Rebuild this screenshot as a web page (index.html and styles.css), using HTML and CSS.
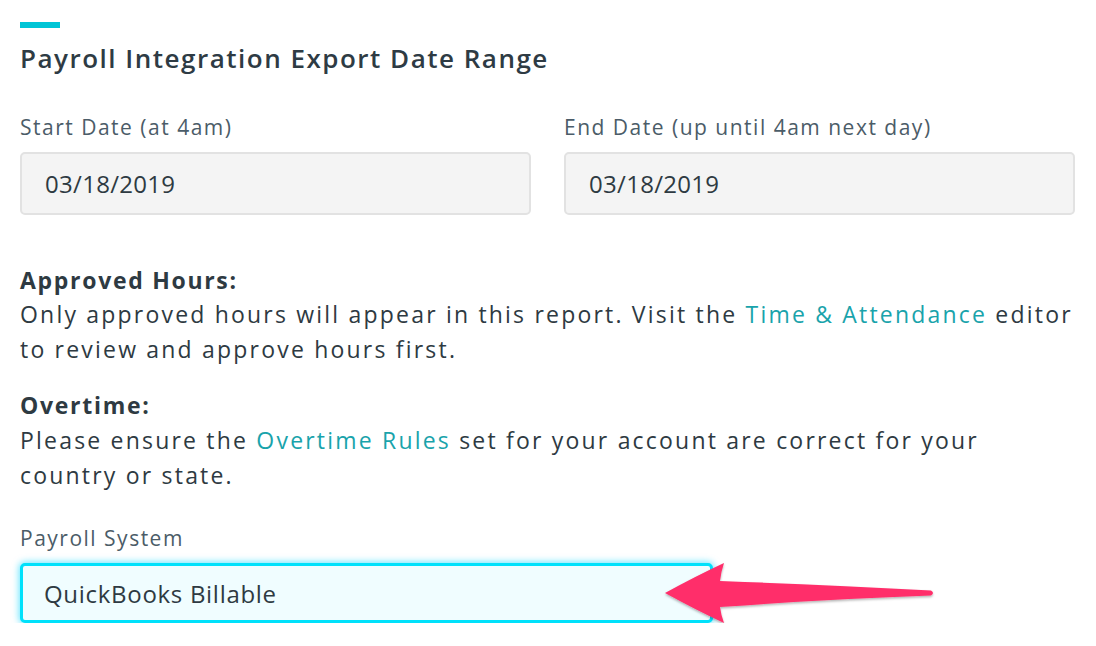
FILE: index.html
```html
<!DOCTYPE html>
<html>
<head>
<meta charset="utf-8">
<link rel="stylesheet" href="styles.css">
</head>
<body>
<div class="page">
  <div class="accent"></div>
  <h1 class="title">Payroll Integration Export Date Range</h1>
  <div class="dates">
    <div class="field">
      <div class="label">Start Date (at 4am)</div>
      <div class="input">03/18/2019</div>
    </div>
    <div class="field">
      <div class="label">End Date (up until 4am next day)</div>
      <div class="input">03/18/2019</div>
    </div>
  </div>
  <div class="note note-first">
    <div class="note-head">Approved Hours:</div>
    <p class="note-text">Only approved hours will appear in this report. Visit the <a class="link">Time &amp; Attendance</a> editor<br>to review and approve hours first.</p>
  </div>
  <div class="note note-second">
    <div class="note-head">Overtime:</div>
    <p class="note-text">Please ensure the <a class="link">Overtime Rules</a> set for your account are correct for your<br>country or state.</p>
  </div>
  <div class="system">
    <div class="label">Payroll System</div>
    <div class="select-wrap">
      <div class="select">QuickBooks Billable</div>
      <svg class="arrow" width="290" height="80" viewBox="0 0 290 80">
        <defs>
          <filter id="sh" x="-10%" y="-20%" width="120%" height="150%">
            <feDropShadow dx="0" dy="1.5" stdDeviation="1.2" flood-color="#000" flood-opacity="0.3"/>
          </filter>
        </defs>
        <path filter="url(#sh)" fill="#ff2f6b" d="M5 35 Q36 18 64 5 Q61 14 60 23 Q170 27 271 32.5 Q275 35 271 37.5 Q170 41 60 49 Q61 57 64 65 Q36 52 5 35 Z"/>
      </svg>
    </div>
  </div>
</div>
</body>
</html>
```
FILE: styles.css
```css
html, body {
  margin: 0;
  padding: 0;
  background: #ffffff;
}
.page {
  padding: 22px 21px 0 20px;
  font-family: "Open Sans", "Liberation Sans", sans-serif;
  color: #2e3a42;
}
.accent {
  width: 40px;
  height: 6px;
  background: #00c5d6;
}
.title {
  margin: 12px 0 0 0;
  font-size: 26px;
  font-weight: 600;
  line-height: 36px;
  letter-spacing: 1.5px;
  color: #2e3b44;
}
.dates {
  display: flex;
  gap: 33px;
  margin-top: 38px;
}
.field {
  flex: 1;
}
.label {
  font-size: 21px;
  line-height: 26px;
  letter-spacing: 1.5px;
  color: #4b5c68;
}
.input {
  margin-top: 12px;
  height: 59px;
  border: 2px solid #e2e2e2;
  border-radius: 5px;
  background: #f4f4f4;
  padding: 0 0 0 23px;
  display: flex;
  align-items: center;
  font-size: 24px;
  letter-spacing: 0.3px;
  color: #2e3a42;
}
.note-first {
  margin-top: 50px;
}
.note-second {
  margin-top: 23px;
}
.note-head {
  font-size: 23px;
  font-weight: 700;
  line-height: 30px;
  letter-spacing: 1.7px;
  color: #2e3a42;
}
.note-text {
  margin: 2px 0 0 0;
  font-size: 23px;
  line-height: 35px;
  letter-spacing: 2.2px;
  white-space: nowrap;
  color: #2e3a42;
}
.note-second .note-text {
  margin-top: 3px;
}
.link {
  color: #19a3ab;
}
.system {
  margin-top: 32px;
}
.select-wrap {
  position: relative;
  margin-top: 12px;
}
.select {
  width: 666px;
  height: 54px;
  border: 3px solid #00e1fb;
  border-radius: 5px;
  box-shadow: 0 0 7px 1px rgba(0, 210, 255, 0.6);
  background: #f0fdff;
  padding-left: 21px;
  display: flex;
  align-items: center;
  font-size: 24px;
  letter-spacing: 0.7px;
  color: #2e3a42;
}
.arrow {
  position: absolute;
  left: 640px;
  top: -5px;
}
```
